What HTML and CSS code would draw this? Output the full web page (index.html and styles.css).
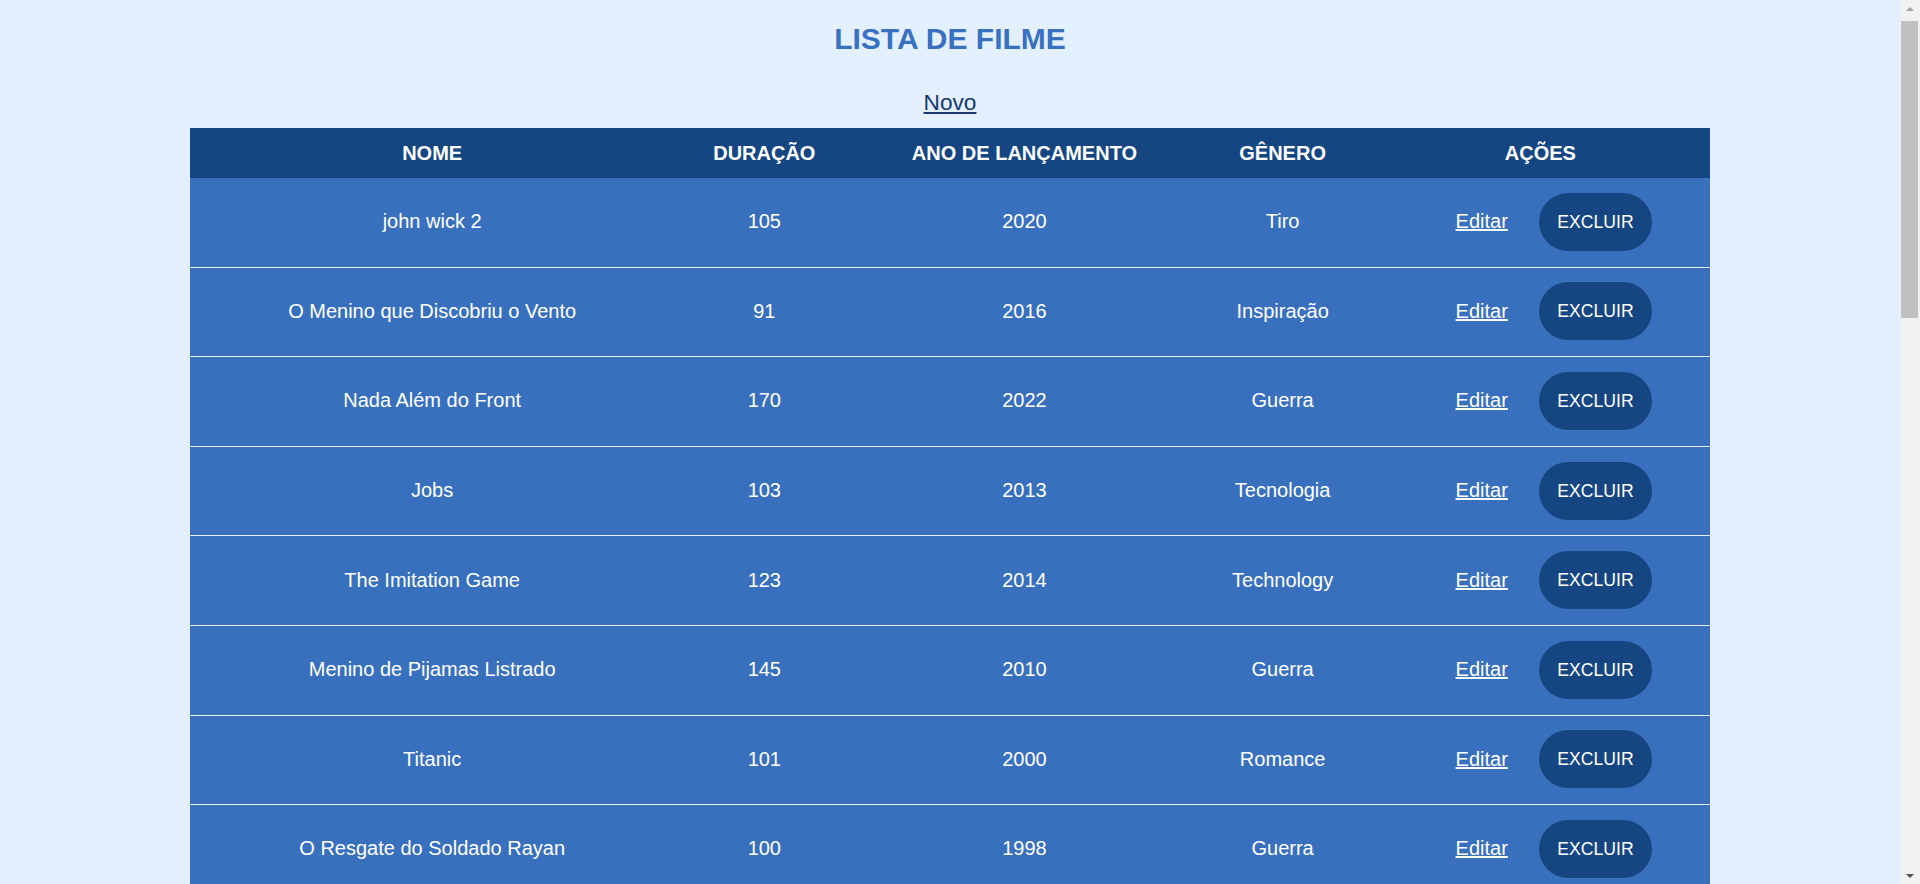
FILE: index.html
```html
<!DOCTYPE html>
<html lang="pt-BR">
<head>
<meta charset="utf-8">
<title>Lista de Filme</title>
<link rel="stylesheet" href="styles.css">
</head>
<body>
<main class="page">
  <h1 class="title">LISTA DE FILME</h1>
  <div class="new-wrap"><a class="new-link" href="#">Novo</a></div>
  <table class="movies">
    <colgroup>
      <col class="c-name"><col class="c-dur"><col class="c-year"><col class="c-genre"><col class="c-act">
    </colgroup>
    <thead>
      <tr><th>NOME</th><th>DURAÇÃO</th><th>ANO DE LANÇAMENTO</th><th>GÊNERO</th><th>AÇÕES</th></tr>
    </thead>
    <tbody>
      <tr><td>john wick 2</td><td>105</td><td>2020</td><td>Tiro</td><td class="actions"><div class="act-box"><a href="#" class="edit">Editar</a><button class="del">EXCLUIR</button></div></td></tr>
      <tr><td>O Menino que Discobriu o Vento</td><td>91</td><td>2016</td><td>Inspiração</td><td class="actions"><div class="act-box"><a href="#" class="edit">Editar</a><button class="del">EXCLUIR</button></div></td></tr>
      <tr><td>Nada Além do Front</td><td>170</td><td>2022</td><td>Guerra</td><td class="actions"><div class="act-box"><a href="#" class="edit">Editar</a><button class="del">EXCLUIR</button></div></td></tr>
      <tr><td>Jobs</td><td>103</td><td>2013</td><td>Tecnologia</td><td class="actions"><div class="act-box"><a href="#" class="edit">Editar</a><button class="del">EXCLUIR</button></div></td></tr>
      <tr><td>The Imitation Game</td><td>123</td><td>2014</td><td>Technology</td><td class="actions"><div class="act-box"><a href="#" class="edit">Editar</a><button class="del">EXCLUIR</button></div></td></tr>
      <tr><td>Menino de Pijamas Listrado</td><td>145</td><td>2010</td><td>Guerra</td><td class="actions"><div class="act-box"><a href="#" class="edit">Editar</a><button class="del">EXCLUIR</button></div></td></tr>
      <tr><td>Titanic</td><td>101</td><td>2000</td><td>Romance</td><td class="actions"><div class="act-box"><a href="#" class="edit">Editar</a><button class="del">EXCLUIR</button></div></td></tr>
      <tr><td>O Resgate do Soldado Rayan</td><td>100</td><td>1998</td><td>Guerra</td><td class="actions"><div class="act-box"><a href="#" class="edit">Editar</a><button class="del">EXCLUIR</button></div></td></tr>
    </tbody>
  </table>
</main>
<aside class="scrollbar" aria-hidden="true">
  <div class="sb-arrow sb-up"></div>
  <div class="sb-track"><div class="sb-thumb"></div></div>
  <div class="sb-arrow sb-down"></div>
</aside>
</body>
</html>
```

FILE: styles.css
```css
html, body {
  margin: 0;
  padding: 0;
  background: #e3f0ff;
}
body {
  font-family: "Liberation Sans", Arial, sans-serif;
}
.page {
  width: calc(100% - 20px);
  min-height: 2520px;
  display: flex;
  flex-direction: column;
  align-items: center;
}
.title {
  margin: 22px 0 0;
  font-size: 30px;
  line-height: 33px;
  font-weight: bold;
  color: #3a70c0;
  text-align: center;
}
.new-wrap {
  margin: 34px 0 12px;
  text-align: center;
}
.new-link {
  font-size: 22.7px;
  color: #1a3a6e;
  text-decoration: underline;
}
.movies {
  width: 80%;
  border-collapse: collapse;
  color: #ffffff;
  font-size: 20px;
}
.c-name { width: 31.86%; }
.c-dur { width: 11.85%; }
.c-year { width: 22.38%; }
.c-genre { width: 11.59%; }
.c-act { width: 22.32%; }
.movies thead tr {
  background: #154682;
}
.movies th {
  padding: 13.5px 0;
  font-weight: bold;
  text-align: center;
  line-height: 23px;
}
.movies tbody tr {
  background: #3970bd;
  border-bottom: 1px solid #e6f0fc;
}
.movies td {
  padding: 14.8px 0 15.8px;
  text-align: center;
  line-height: 23px;
  height: 58px;
}
.act-box {
  display: flex;
  justify-content: center;
  align-items: center;
  gap: 31px;
  padding-left: 27px;
}
.edit {
  color: #ffffff;
  text-decoration: underline;
  font-size: 20px;
}
.del {
  font-family: "Liberation Sans", Arial, sans-serif;
  font-size: 17.6px;
  line-height: 20px;
  color: #ffffff;
  background: #154682;
  border: none;
  border-radius: 30px;
  padding: 19px 18.5px;
  cursor: pointer;
}

/* browser scrollbar as seen in the screenshot */
.scrollbar {
  position: fixed;
  top: 0;
  right: 0;
  bottom: 0;
  width: 20px;
  background: #f1f1f1;
  display: flex;
  flex-direction: column;
}
.sb-arrow {
  height: 17px;
  display: flex;
  align-items: center;
  justify-content: center;
}
.sb-up::before {
  content: "";
  border-left: 4px solid transparent;
  border-right: 4px solid transparent;
  border-bottom: 4px solid #a3a3a3;
}
.sb-down::before {
  content: "";
  border-left: 4px solid transparent;
  border-right: 4px solid transparent;
  border-top: 4px solid #505050;
}
.sb-track {
  flex: 1;
  padding: 4px 2px 0 1px;
}
.sb-thumb {
  height: 297px;
  background: #c1c1c1;
}
```
